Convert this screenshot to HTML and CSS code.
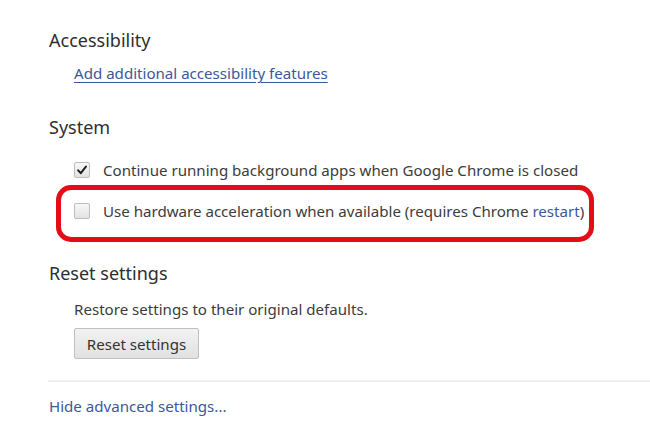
FILE: index.html
```html
<!DOCTYPE html>
<html>
<head>
<meta charset="utf-8">
<link rel="stylesheet" href="styles.css">
</head>
<body>
<main class="page">
  <section class="section sec-access">
    <h3 class="heading">Accessibility</h3>
    <div class="content">
      <a class="link underline" href="#">Add additional accessibility features</a>
    </div>
  </section>
  <section class="section sec-system">
    <h3 class="heading">System</h3>
    <div class="content">
      <label class="row row-first">
        <span class="checkbox checked">
          <svg viewBox="0 0 16 16" width="16" height="16"><path d="M3.6 8.4 L6.6 11.6 L12.6 4" fill="none" stroke="#1a1a1a" stroke-width="2.3" stroke-linecap="round" stroke-linejoin="round"/></svg>
        </span>
        <span class="label">Continue running background apps when Google Chrome is closed</span>
      </label>
      <label class="row row-second highlight">
        <span class="checkbox"></span>
        <span class="label">Use hardware acceleration when available (requires Chrome <a class="link" href="#">restart</a>)</span>
      </label>
    </div>
  </section>
  <section class="section sec-reset">
    <h3 class="heading">Reset settings</h3>
    <div class="content">
      <p class="desc">Restore settings to their original defaults.</p>
      <button class="button" type="button">Reset settings</button>
    </div>
  </section>
  <hr class="separator">
  <a class="link hide-link" href="#">Hide advanced settings...</a>
</main>
</body>
</html>
```
FILE: styles.css
```css
html, body {
  margin: 0;
  padding: 0;
  background: #ffffff;
}
body {
  font-family: "Noto Sans", "Open Sans", "Liberation Sans", sans-serif;
  color: #3c3c3c;
  font-size: 15.1px;
}
.page {
  display: flex;
  flex-direction: column;
  align-items: flex-start;
  padding: 28px 0 0 49px;
}
.section {
  display: flex;
  flex-direction: column;
  align-items: flex-start;
}
.heading {
  margin: 0;
  font-weight: normal;
  font-size: 18px;
  line-height: 24px;
  color: #2e2e2e;
}
.content {
  display: flex;
  flex-direction: column;
  align-items: flex-start;
  padding-left: 25px;
}
.link {
  color: #3b5998;
  text-decoration: none;
}
.underline {
  text-decoration: underline;
  text-underline-offset: 3px;
}
.sec-access .content { margin-top: 9px; }
.sec-access .link { line-height: 24px; }
.sec-system { margin-top: 30px; }
.sec-system .content { margin-top: 19px; }
.row {
  display: flex;
  align-items: center;
  gap: 13px;
  line-height: 24px;
  height: 24px;
}
.row-second {
  margin-top: 17px;
  position: relative;
}
.highlight::after {
  content: "";
  position: absolute;
  left: -18px;
  top: -14px;
  width: 528px;
  height: 47px;
  border: 5px solid #e20d17;
  border-radius: 15px;
}
.checkbox {
  width: 14px;
  height: 14px;
  border: 1px solid #bdbdbd;
  border-radius: 2px;
  background: linear-gradient(#f7f7f7, #e2e2e2);
  display: flex;
  align-items: center;
  justify-content: center;
  flex: none;
}
.checkbox svg { display: block; }
.sec-reset { margin-top: 38px; }
.sec-reset .content { margin-top: 12px; }
.desc {
  margin: 0;
  line-height: 24px;
}
.button {
  margin-top: 7px;
  width: 125px;
  height: 31px;
  font-family: inherit;
  font-size: 15.1px;
  color: #333;
  border: 1px solid #c0c0c0;
  border-radius: 2px;
  background: linear-gradient(#f2f2f2, #e1e1e1);
  padding: 0;
}
.separator {
  align-self: stretch;
  margin: 21px 0 0 -1px;
  border: 0;
  height: 2px;
  background: #efefef;
}
.hide-link {
  margin-top: 12px;
  line-height: 24px;
}
```
